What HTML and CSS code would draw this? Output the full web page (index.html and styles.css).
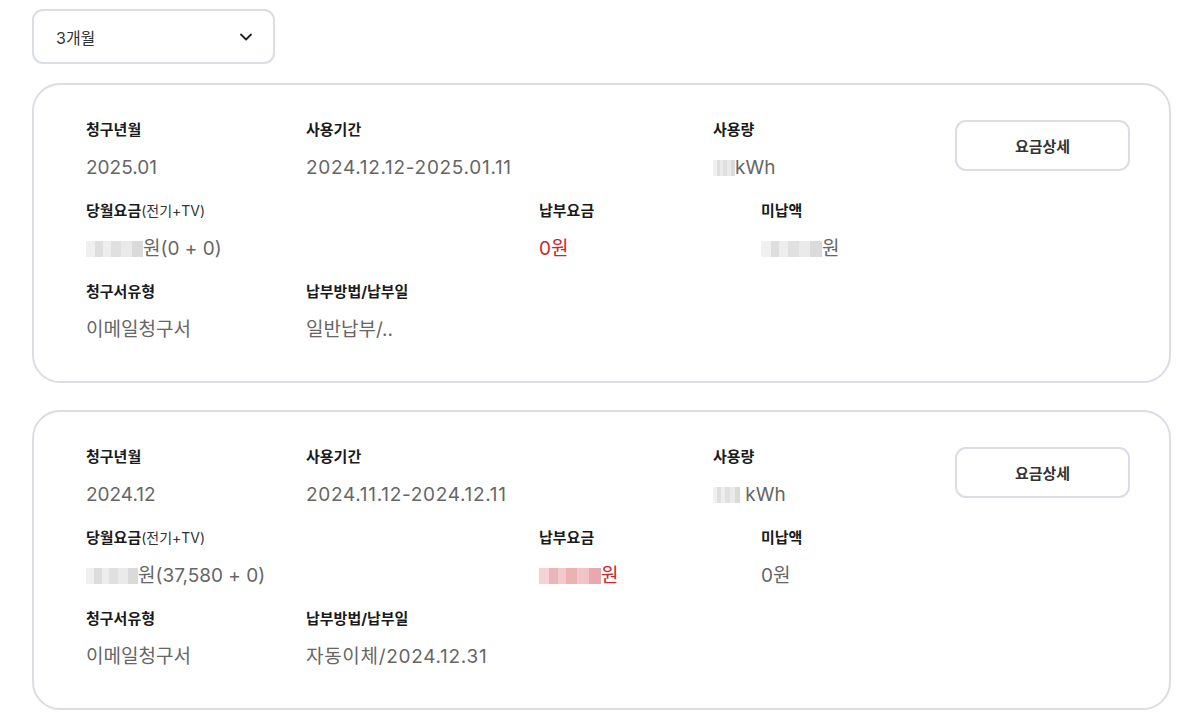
FILE: index.html
```html
<!DOCTYPE html>
<html lang="ko">
<head>
    <meta charset="UTF-8">
    <meta name="viewport" content="width=device-width, initial-scale=1.0">
    <title>청구내역</title>
    <link rel="stylesheet" href="styles.css">
</head>
<body>
    <div class="page">
        <div class="period-select">
            <span>3개월</span>
            <svg class="chevron" width="14" height="14" viewBox="0 0 14 14">
                <path d="M2 4.5 L7 9.5 L12 4.5" fill="none" stroke="#222" stroke-width="1.8" stroke-linecap="round" stroke-linejoin="round"/>
            </svg>
        </div>

        <div class="bill-card">
            <div class="bill-info">
                <div class="bill-row row-a">
                    <div class="item">
                        <div class="label">청구년월</div>
                        <div class="value">2025.01</div>
                    </div>
                    <div class="item">
                        <div class="label">사용기간</div>
                        <div class="value period">2024.12.12-2025.01.11</div>
                    </div>
                    <div class="item">
                        <div class="label">사용량</div>
                        <div class="value"><span class="mask w22"></span>kWh</div>
                    </div>
                </div>
                <div class="bill-row row-b">
                    <div class="item">
                        <div class="label">당월요금<span class="sub">(전기+TV)</span></div>
                        <div class="value"><span class="mask w57"></span>원(0 + 0)</div>
                    </div>
                    <div class="item">
                        <div class="label">납부요금</div>
                        <div class="value red">0원</div>
                    </div>
                    <div class="item">
                        <div class="label">미납액</div>
                        <div class="value"><span class="mask w61"></span>원</div>
                    </div>
                </div>
                <div class="bill-row row-a">
                    <div class="item">
                        <div class="label">청구서유형</div>
                        <div class="value">이메일청구서</div>
                    </div>
                    <div class="item">
                        <div class="label">납부방법/납부일</div>
                        <div class="value">일반납부/..</div>
                    </div>
                </div>
            </div>
            <button class="detail-btn">요금상세</button>
        </div>

        <div class="bill-card">
            <div class="bill-info">
                <div class="bill-row row-a">
                    <div class="item">
                        <div class="label">청구년월</div>
                        <div class="value">2024.12</div>
                    </div>
                    <div class="item">
                        <div class="label">사용기간</div>
                        <div class="value period">2024.11.12-2024.12.11</div>
                    </div>
                    <div class="item">
                        <div class="label">사용량</div>
                        <div class="value"><span class="mask w27"></span> kWh</div>
                    </div>
                </div>
                <div class="bill-row row-b">
                    <div class="item">
                        <div class="label">당월요금<span class="sub">(전기+TV)</span></div>
                        <div class="value"><span class="mask w52"></span>원(37,580 + 0)</div>
                    </div>
                    <div class="item">
                        <div class="label">납부요금</div>
                        <div class="value red"><span class="mask red-mask w62"></span>원</div>
                    </div>
                    <div class="item">
                        <div class="label">미납액</div>
                        <div class="value">0원</div>
                    </div>
                </div>
                <div class="bill-row row-a">
                    <div class="item">
                        <div class="label">청구서유형</div>
                        <div class="value">이메일청구서</div>
                    </div>
                    <div class="item">
                        <div class="label">납부방법/납부일</div>
                        <div class="value period">자동이체/2024.12.31</div>
                    </div>
                </div>
            </div>
            <button class="detail-btn">요금상세</button>
        </div>
    </div>
</body>
</html>
```

FILE: styles.css
```css
body {
    margin: 0;
    background-color: #fff;
    font-family: Inter, "Noto Sans CJK KR", sans-serif;
    color: #222;
}

.page {
    padding: 9px 29px 0 32px;
}

.period-select {
    width: 243px;
    height: 55px;
    box-sizing: border-box;
    border: 2px solid #dadde5;
    border-radius: 11px;
    display: flex;
    align-items: center;
    justify-content: space-between;
    padding: 0 20px 0 22px;
    font-size: 16px;
    color: #333;
    margin-bottom: 19px;
}

.chevron {
    display: block;
}

.bill-card {
    box-sizing: border-box;
    height: 300px;
    border: 2px solid #dadde5;
    border-radius: 28px;
    padding: 34px 39px 0 52px;
    display: flex;
    justify-content: space-between;
    align-items: flex-start;
    margin-bottom: 27px;
}

.bill-info {
    flex: 1;
}

.bill-row {
    display: flex;
    margin-bottom: 18px;
}

.row-a .item:nth-child(1) { width: 220px; }
.row-a .item:nth-child(2) { width: 407px; }
.row-b .item:nth-child(1) { width: 453px; }
.row-b .item:nth-child(2) { width: 222px; }

.label {
    font-size: 15px;
    font-weight: 700;
    line-height: 22px;
    color: #1a1a1a;
}

.label .sub {
    font-size: 14px;
    font-weight: 400;
    color: #333;
}

.value {
    margin-top: 13px;
    font-size: 19px;
    line-height: 28px;
    color: #666;
    display: flex;
    align-items: center;
    white-space: pre;
}

.value.period {
    letter-spacing: 0.7px;
}

.value.red {
    color: #d2222b;
}

.mask {
    display: inline-block;
    height: 16px;
    background: linear-gradient(90deg,
        #f0f0f0 0, #f0f0f0 16%,
        #dedede 16%, #dedede 30%,
        #ededed 30%, #ededed 44%,
        #e0e0e0 44%, #e0e0e0 62%,
        #eaeaea 62%, #eaeaea 80%,
        #dadada 80%, #dadada 100%);
}

.red-mask {
    background: linear-gradient(90deg,
        #f5d2d5 0, #f5d2d5 16%,
        #ecb4b8 16%, #ecb4b8 30%,
        #f3cacd 30%, #f3cacd 44%,
        #ebb2b6 44%, #ebb2b6 62%,
        #f1c5c8 62%, #f1c5c8 80%,
        #e8a8ad 80%, #e8a8ad 100%);
}

.w22 { width: 22px; }
.w27 { width: 27px; }
.w52 { width: 52px; }
.w57 { width: 57px; }
.w61 { width: 61px; }
.w62 { width: 62px; }

.detail-btn {
    width: 175px;
    height: 51px;
    margin-top: 1px;
    background-color: #fff;
    border: 2px solid #dadde5;
    border-radius: 11px;
    font-family: Inter, "Noto Sans CJK KR", sans-serif;
    font-size: 15px;
    font-weight: 700;
    color: #333;
    cursor: pointer;
}
```
